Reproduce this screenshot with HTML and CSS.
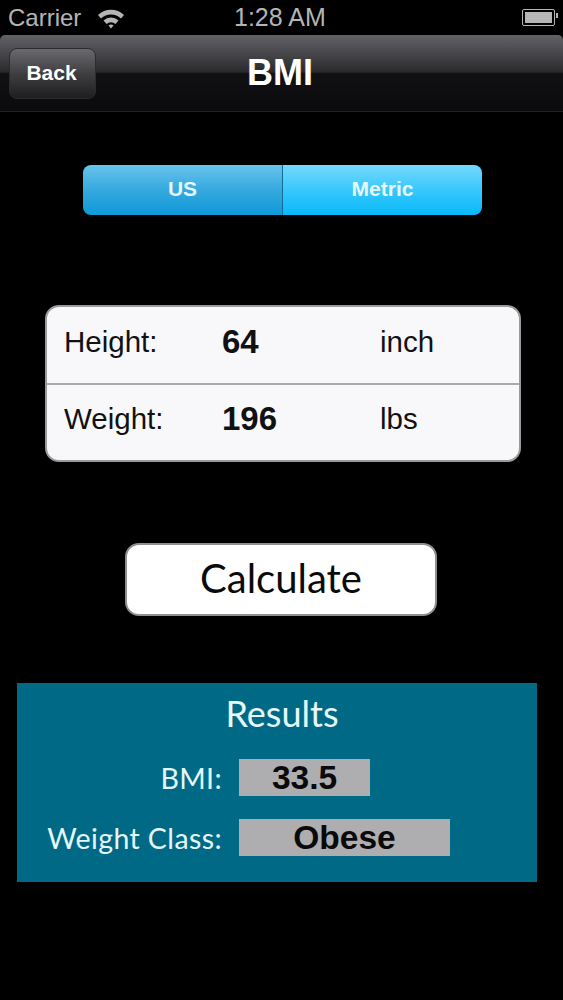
FILE: index.html
```html
<!DOCTYPE html>
<html lang="en">
<head>
    <meta charset="UTF-8">
    <meta name="viewport" content="width=device-width, initial-scale=1.0">
    <title>BMI</title>
    <link rel="stylesheet" href="styles.css">
</head>
<body>
    <div class="status-bar">
        <div class="status-left">
            <span>Carrier</span>
            <svg class="wifi" width="28" height="22" viewBox="0 0 28 22">
                <path d="M1 8 A19 19 0 0 1 27 8 L24 11.5 A14.5 14.5 0 0 0 4 11.5 Z" fill="#b5b5b5"/>
                <path d="M6.5 13.5 A11 11 0 0 1 21.500 13.500 L18.500 17 A6.500 6.500 0 0 0 9.500 17 Z" fill="#b5b5b5"/>
                <path d="M11.500 18.500 A4 4 0 0 1 16.500 18.500 L14 21.500 Z" fill="#b5b5b5"/>
            </svg>
        </div>
        <span class="status-time">1:28 AM</span>
        <div class="battery"><div class="battery-fill"></div></div>
    </div>

    <div class="nav-bar">
        <button class="back">Back</button>
        <h1>BMI</h1>
    </div>

    <div class="segments">
        <div class="segment us">US</div>
        <div class="segment metric">Metric</div>
    </div>

    <div class="form-table">
        <div class="form-row">
            <span class="form-label">Height:</span>
            <span class="form-value">64</span>
            <span class="form-unit">inch</span>
        </div>
        <div class="form-row">
            <span class="form-label">Weight:</span>
            <span class="form-value">196</span>
            <span class="form-unit">lbs</span>
        </div>
    </div>

    <button class="calculate">Calculate</button>

    <div class="results">
        <h2>Results</h2>
        <div class="result-row">
            <span class="result-label">BMI:</span>
            <span class="result-value bmi-value">33.5</span>
        </div>
        <div class="result-row">
            <span class="result-label">Weight Class:</span>
            <span class="result-value class-value">Obese</span>
        </div>
    </div>
</body>
</html>
```

FILE: styles.css
```css
html, body {
    margin: 0;
    padding: 0;
}
body {
    width: 563px;
    height: 1000px;
    overflow: hidden;
    background-color: #000000;
    font-family: "Liberation Sans", Arial, sans-serif;
}
.status-bar {
    display: flex;
    align-items: center;
    justify-content: space-between;
    position: relative;
    height: 35px;
    padding: 0 7px 0 8px;
    color: #b5b5b5;
    font-size: 24px;
}
.status-left {
    display: flex;
    align-items: center;
    gap: 16px;
}
.status-time {
    position: absolute;
    left: 234px;
    top: 3px;
    font-size: 25px;
}
.battery {
    position: relative;
    width: 27px;
    height: 11px;
    margin-right: 1px;
    padding: 2px;
    border: 1px solid #b5b5b5;
    border-radius: 2px;
}
.battery::after {
    content: "";
    position: absolute;
    right: -4px;
    top: 3px;
    width: 2px;
    height: 5px;
    background-color: #b5b5b5;
}
.battery-fill {
    height: 100%;
    background-color: #b5b5b5;
}
.nav-bar {
    display: flex;
    align-items: center;
    position: relative;
    height: 77px;
    box-sizing: border-box;
    padding-left: 9px;
    border-bottom: 1px solid #222222;
    border-radius: 5px 5px 0 0;
    background: linear-gradient(to bottom, #626166 0%, #464549 25%, #2a292c 49%, #111012 50%, #0b0a0c 100%);
}
.nav-bar h1 {
    position: absolute;
    left: 0;
    width: 560px;
    margin: 0;
    text-align: center;
    color: #ffffff;
    font-size: 36px;
    font-weight: bold;
}
.back {
    width: 87px;
    height: 51px;
    margin-top: 1px;
    padding: 0 2px 2px 0;
    border: 1px solid #2c2c2e;
    border-radius: 8px;
    background: linear-gradient(to bottom, #6a696d 0%, #3f3e41 50%, #1e1d1f 100%);
    color: #ffffff;
    font-family: "Liberation Sans", Arial, sans-serif;
    font-size: 21px;
    font-weight: bold;
}
.segments {
    display: flex;
    width: 399px;
    height: 50px;
    margin: 53px 0 0 83px;
    border-radius: 8px;
    overflow: hidden;
}
.segment {
    display: flex;
    align-items: center;
    justify-content: center;
    padding-bottom: 3px;
    box-sizing: border-box;
    color: #e8f6fd;
    font-size: 21px;
    font-weight: bold;
}
.us {
    width: 200px;
    border-right: 1px solid #136d98;
    background: linear-gradient(to bottom, #67c4ed 0%, #35a8de 50%, #0f9ad9 100%);
}
.metric {
    width: 199px;
    background: linear-gradient(to bottom, #74d9fe 0%, #38c8fc 50%, #08b8fa 100%);
}
.form-table {
    width: 476px;
    height: 157px;
    margin: 90px 0 0 45px;
    border: 2px solid #9a9a9c;
    border-radius: 14px;
    background-color: #f8f8fb;
    box-sizing: border-box;
}
.form-row {
    display: flex;
    align-items: center;
    height: 76px;
    box-sizing: border-box;
    padding: 0 0 6px 17px;
    color: #111111;
    font-size: 29.5px;
}
.form-row + .form-row {
    height: 77px;
    padding-bottom: 8px;
    border-top: 2px solid #aaaaac;
}
.form-label {
    width: 158px;
}
.form-value {
    width: 158px;
    font-size: 33px;
    font-weight: bold;
}
.calculate {
    display: block;
    width: 312px;
    height: 73px;
    margin: 81px 0 0 125px;
    padding: 0 0 3px 0;
    border: 2px solid #8f8f91;
    border-radius: 14px;
    background-color: #ffffff;
    color: #0a0a0a;
    font-family: Lato, "Liberation Sans", sans-serif;
    font-size: 40px;
}
.results {
    width: 520px;
    height: 199px;
    margin: 67px 0 0 17px;
    background-color: #006a86;
    color: #e6f7fa;
    font-family: Lato, "Liberation Sans", sans-serif;
}
.results h2 {
    height: 76px;
    margin: 0;
    padding: 8px 0 0 10px;
    box-sizing: border-box;
    text-align: center;
    font-size: 36px;
    font-weight: normal;
}
.result-row {
    display: flex;
    align-items: center;
    height: 37px;
    margin-bottom: 23px;
}
.result-label {
    width: 205px;
    text-align: right;
    font-size: 28.500px;
    letter-spacing: 0.4px;
}
.result-value {
    display: flex;
    align-items: center;
    justify-content: center;
    height: 37px;
    margin-left: 17px;
    background-color: #aeadaf;
    color: #0a0a0a;
    font-family: "Liberation Sans", Arial, sans-serif;
    font-size: 33.500px;
    font-weight: bold;
}
.bmi-value {
    width: 131px;
}
.class-value {
    width: 211px;
}
```
